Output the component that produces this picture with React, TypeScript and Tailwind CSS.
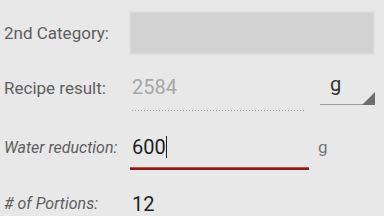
import React from "react";

export default function App() {
  return (
    <div
      className="w-[384px] h-[216px] overflow-hidden bg-[#e8e8e8] flex flex-col"
      style={{ fontFamily: "Roboto, 'Noto Sans', sans-serif" }}
    >
      {/* Row 1 */}
      <div className="shrink-0 h-[64px] flex items-center">
        <div className="w-[130px] pl-[4px] pt-[3px] text-[17px] text-[#5e5e5e]">2nd Category:</div>
        <div className="flex-1 mr-[10px] mt-[2px] h-[42px] bg-[#d2d2d2] border border-[#dadada] shadow-[0_0_0_1px_#e0e0e0]" />
      </div>

      {/* Row 2 */}
      <div className="shrink-0 h-[48px] flex items-stretch">
        <div className="w-[130px] pl-[4px] pt-[1px] flex items-center text-[17px] text-[#5e5e5e]">Recipe result:</div>
        <div className="w-[175px] flex flex-col pl-[2px]">
          <div className="flex-1 flex items-center text-[20px] text-[#a6a6a6]">2584</div>
          <div className="h-[1px] mb-[1px] bg-[repeating-linear-gradient(90deg,#a8a8a8_0_1px,transparent_1px_3px)]" />
        </div>
        <div className="ml-[15px] w-[55px] flex flex-col mb-[7px]">
          <div className="flex-1 flex items-center pl-[10px] text-[20px] text-[#333]">g</div>
          <div className="relative h-[1px] bg-[#9a9a9a]">
            <div className="absolute right-0 bottom-0 w-0 h-0 border-l-[13px] border-l-transparent border-b-[13px] border-b-[#6e6e6e]" />
          </div>
        </div>
      </div>

      {/* Row 3 */}
      <div className="shrink-0 mt-[14px] h-[44px] flex items-stretch">
        <div className="w-[130px] pl-[4px] flex items-center text-[16px] italic text-[#5e5e5e]">Water reduction:</div>
        <div className="w-[179px] flex flex-col">
          <div className="flex-1 flex items-center pl-[2px] text-[20px] text-[#1e1e1e]">
            <span>600</span>
            <span className="inline-block w-[1px] h-[22px] bg-[#1e1e1e]" />
          </div>
          <div className="h-[2px] bg-[#8a1a1a] shadow-[0_-1px_0_#c84a4a]" />
        </div>
        <div className="ml-[9px] flex items-center text-[17px] text-[#767676]">g</div>
      </div>

      {/* Row 4 */}
      <div className="shrink-0 mt-[12px] h-[44px] flex items-center">
        <div className="w-[130px] pl-[4px] text-[16px] italic text-[#5e5e5e]"># of Portions:</div>
        <div className="pl-[2px] text-[20px] text-[#1e1e1e]">12</div>
      </div>
    </div>
  );
}
